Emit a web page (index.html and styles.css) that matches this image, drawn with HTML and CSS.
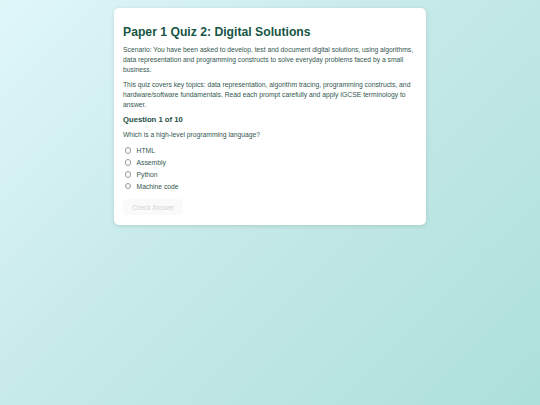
FILE: index.html
```html
<!DOCTYPE html>
<html>
<head>
<meta charset="utf-8">
<link rel="stylesheet" href="styles.css">
</head>
<body>
<main class="card">
  <h1 class="title">Paper 1 Quiz 2: Digital Solutions</h1>
  <p class="intro">Scenario: You have been asked to develop, test and document digital solutions, using algorithms, data representation and programming constructs to solve everyday problems faced by a small business.</p>
  <p class="intro">This quiz covers key topics: data representation, algorithm tracing, programming constructs, and hardware/software fundamentals. Read each prompt carefully and apply IGCSE terminology to answer.</p>
  <div class="qnum">Question 1 of 10</div>
  <p class="qtext">Which is a high-level programming language?</p>
  <ul class="options">
    <li class="option"><span class="radio"></span><span>HTML</span></li>
    <li class="option"><span class="radio"></span><span>Assembly</span></li>
    <li class="option"><span class="radio"></span><span>Python</span></li>
    <li class="option"><span class="radio"></span><span>Machine code</span></li>
  </ul>
  <button class="check" disabled>Check Answer</button>
</main>
</body>
</html>
```
FILE: styles.css
```css
html, body {
  margin: 0;
  height: 100%;
}
body {
  background: linear-gradient(135deg, #e0f7fa 0%, #c6e9e9 45%, #ade0da 100%);
  font-family: "Liberation Sans", Arial, sans-serif;
  color: #33574f;
  padding-top: 8px;
  box-sizing: border-box;
}
.card {
  width: 312px;
  margin: 0 auto;
  background: #fff;
  border-radius: 5px;
  box-shadow: 0 1px 4px rgba(0, 0, 0, 0.12);
  padding: 15px 8px 10px 9px;
  box-sizing: border-box;
}
.title {
  margin: 0 0 4.2px;
  font-size: 12.2px;
  line-height: 18px;
  font-weight: bold;
  color: #175646;
}
.intro {
  margin: 0 0 6px;
  font-size: 6.75px;
  line-height: 9.7px;
}
.qnum {
  margin: 0;
  font-size: 7.7px;
  line-height: 9.7px;
  font-weight: bold;
  color: #1d4f45;
}
.qtext {
  margin: 4.8px 0 0;
  font-size: 6.75px;
  line-height: 9.7px;
}
.options {
  list-style: none;
  margin: 5.2px 0 0;
  padding: 0;
}
.option {
  display: flex;
  align-items: center;
  gap: 5.5px;
  height: 11.8px;
  font-size: 6.75px;
}
.radio {
  width: 4.6px;
  height: 4.6px;
  border: 0.6px solid #9a9a9a;
  border-radius: 50%;
  margin-left: 1.5px;
}
.check {
  display: block;
  margin-top: 7.5px;
  font-family: "Liberation Sans", Arial, sans-serif;
  font-size: 6.6px;
  white-space: nowrap;
  color: #d2d6d5;
  background: #fafafa;
  border: none;
  border-radius: 4px;
  padding: 0 9px;
  height: 16px;
}
```
